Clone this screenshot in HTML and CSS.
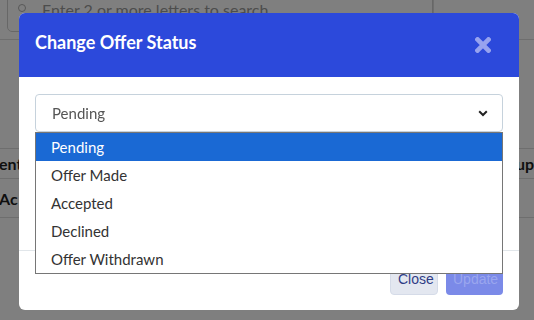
FILE: index.html
```html
<!DOCTYPE html>
<html>
	<head>
		<meta charset="UTF-8" />
		<title>Change Offer Status</title>
		<link rel="stylesheet" href="styles.css">
	</head>
	<body>
		<div class="page">
			<div class="topbar">
				<div class="search">
					<span class="search-icon"></span>
					<span class="search-text">Enter 2 or more letters to search</span>
				</div>
				<div class="topbar-side"></div>
			</div>
			<div class="grid">
				<div class="grid-row grid-head">
					<span>ent</span>
					<span>up</span>
				</div>
				<div class="grid-row">
					<span>Ac</span>
				</div>
			</div>
		</div>

		<div class="backdrop"></div>

		<div class="modal">
			<div class="modal-header">
				<h4 class="modal-title">Change Offer Status</h4>
				<svg class="modal-close" width="16" height="16" viewBox="0 0 16 16">
					<path d="M2.5 2.5 L13.5 13.5 M13.5 2.5 L2.5 13.5" stroke="#97a3ef" stroke-width="4.6" stroke-linecap="square" />
				</svg>
			</div>
			<div class="modal-body">
				<div class="select">
					<span>Pending</span>
					<svg class="chevron" width="10" height="7" viewBox="0 0 10 7">
						<path d="M1.2 1.3 L5 5 L8.8 1.3" fill="none" stroke="#222" stroke-width="2" />
					</svg>
				</div>
			</div>
			<div class="modal-footer">
				<button class="btn btn-close">Close</button>
				<button class="btn btn-update" disabled>Update</button>
			</div>

			<!-- opened native list of the select -->
			<ul class="options">
				<li class="active">Pending</li>
				<li>Offer Made</li>
				<li>Accepted</li>
				<li>Declined</li>
				<li>Offer Withdrawn</li>
			</ul>
		</div>
	</body>
</html>
```

FILE: styles.css
```css
* {
	margin: 0;
	padding: 0;
	box-sizing: border-box;
	list-style: none;
}

body {
	width: 534px;
	height: 320px;
	overflow: hidden;
	background: #fff;
	font-family: Lato, "Liberation Sans", sans-serif;
	color: #222;
}

/* page behind the dialog */
.page {
	margin-top: -8px;
}

.topbar {
	display: flex;
	height: 48px;
	border-bottom: 1px solid #dcdcdc;
}

.search {
	display: flex;
	align-items: center;
	gap: 16px;
	width: 426px;
	height: 40px;
	margin-left: 7px;
	padding-left: 10px;
	border: 1px solid #cfcfcf;
	border-radius: 5px;
}

.search-icon {
	width: 8px;
	height: 8px;
	border: 1px solid #b0b0b0;
	border-radius: 50%;
	margin-top: -8px;
}

.search-text {
	font-size: 16px;
	color: #9a9a9a;
	margin-top: -6px;
}

.topbar-side {
	border-left: 1px solid #dcdcdc;
	flex: 1;
}

.grid {
	margin-top: 108px;
	border-top: 1px solid #dcdcdc;
}

.grid-row {
	display: flex;
	justify-content: space-between;
	align-items: center;
	height: 39px;
	border-bottom: 1px solid #dcdcdc;
	font-size: 16px;
	font-weight: bold;
	color: #1e1e1e;
}

.grid-head {
	height: 30px;
}

.grid-row span:first-child {
	margin-left: -1px;
}

.backdrop {
	position: fixed;
	inset: 0;
	background: rgba(0, 0, 0, .5);
}

/* dialog */
.modal {
	position: fixed;
	left: 19px;
	top: 13px;
	width: 500px;
	height: 297px;
	background: #fff;
	border-radius: 6px;
	display: flex;
	flex-direction: column;
}

.modal-header {
	display: flex;
	justify-content: space-between;
	align-items: center;
	height: 64px;
	padding: 0 16px;
	background: #2c49db;
	border-radius: 6px 6px 0 0;
}

.modal-title {
	color: #fff;
	font-size: 18px;
	font-weight: bold;
	margin-top: -6px;
}

.modal-close {
	margin-right: 12px;
}

.modal-body {
	flex: 1;
	padding: 17px 16px;
}

.select {
	display: flex;
	justify-content: space-between;
	align-items: center;
	height: 38px;
	padding: 0 14px 0 16px;
	border: 1px solid #c6d2dc;
	border-radius: 4px;
	font-size: 15px;
	color: #555;
}

.modal-footer {
	display: flex;
	justify-content: flex-end;
	gap: 8px;
	padding: 16px 16px 15px;
	border-top: 1px solid #e1e6ea;
}

.btn {
	height: 28px;
	padding: 0 7px 4px;
	border: none;
	border-radius: 4px;
	font-family: "Liberation Sans", Arial, sans-serif;
	font-size: 14px;
}

.btn-close {
	width: 48px;
	background: #e3e7f0;
	color: #2f3d86;
	border: 1px solid #d5dbe8;
}

.btn-update {
	width: 57px;
	background: #7b8ae8;
	color: #9aa6ee;
}

.options {
	position: absolute;
	left: 16px;
	top: 119px;
	width: 468px;
	border: 1px solid #767676;
	background: #fff;
}

.options li {
	height: 28px;
	line-height: 28px;
	padding-left: 15px;
	font-size: 15px;
	color: #333;
}

.options li.active {
	background: #1a69d4;
	color: #fff;
}
```
